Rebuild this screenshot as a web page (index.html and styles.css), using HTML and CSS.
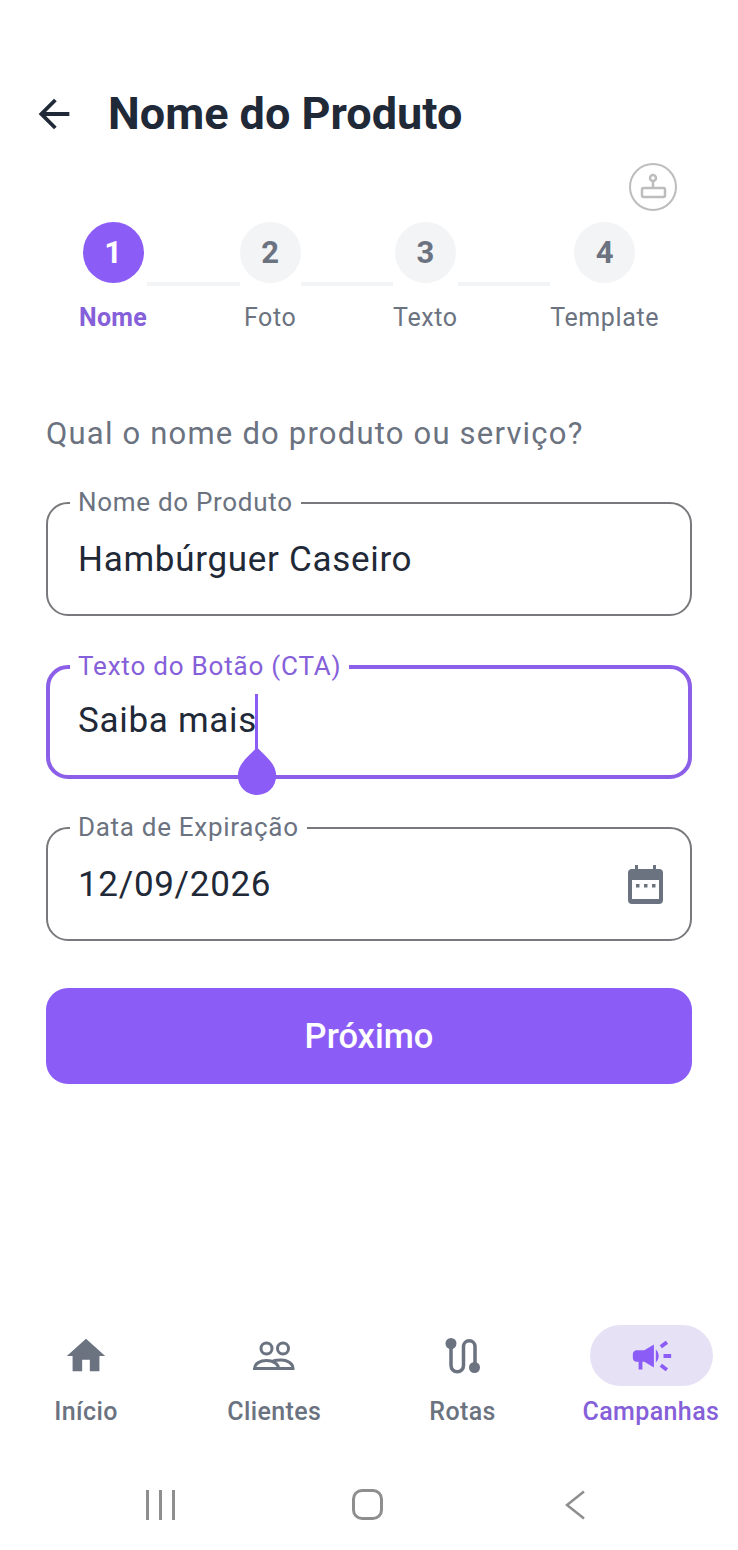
FILE: index.html
```html
<!DOCTYPE html>
<html lang="pt-BR">
<head>
  <meta charset="UTF-8" />
  <meta name="viewport" content="width=device-width, initial-scale=1.0" />
  <title>Nome do Produto</title>
  <link rel="stylesheet" href="styles.css">
</head>
<body>
  <div class="screen">
    <header class="topbar">
      <svg class="back" viewBox="0 0 24 24"><path d="M20 11H7.83l5.59-5.59L12 4l-8 8 8 8 1.41-1.41L7.83 13H20v-2z"/></svg>
      <h1>Nome do Produto</h1>
    </header>

    <div class="tools">
      <svg class="stamp" viewBox="0 0 48 48">
        <circle cx="24" cy="24" r="23"/>
        <g class="stamp-mark">
          <circle cx="24" cy="15" r="3"/>
          <path d="M24 18v7"/>
          <rect x="13" y="25" width="23" height="9" rx="1.5"/>
        </g>
      </svg>
    </div>

    <div class="stepper">
      <div class="step active"><span class="dot">1</span><span class="label">Nome</span></div>
      <span class="line"></span>
      <div class="step"><span class="dot">2</span><span class="label">Foto</span></div>
      <span class="line"></span>
      <div class="step"><span class="dot">3</span><span class="label">Texto</span></div>
      <span class="line"></span>
      <div class="step"><span class="dot">4</span><span class="label">Template</span></div>
    </div>

    <form class="form">
      <p class="question">Qual o nome do produto ou serviço?</p>

      <fieldset class="field">
        <legend>Nome do Produto</legend>
        <div class="value">Hambúrguer Caseiro</div>
      </fieldset>

      <fieldset class="field focus">
        <legend>Texto do Botão (CTA)</legend>
        <div class="value">Saiba mais<span class="caret"><svg class="handle" viewBox="0 0 40 50"><path d="M20 0C26 8 40 16 40 30A20 20 0 0 1 0 30C0 16 14 8 20 0z"/></svg></span></div>
      </fieldset>

      <fieldset class="field">
        <legend>Data de Expiração</legend>
        <div class="value">
          12/09/2026
          <svg class="calendar" viewBox="0 0 36 39">
            <path class="fill" d="M7 0h3v4h15V0h3v4h3a4 4 0 0 1 4 4v27a4 4 0 0 1-4 4H4a4 4 0 0 1-4-4V8a4 4 0 0 1 4-4h3z"/>
            <rect class="paper" x="4" y="15" width="27" height="19"/>
            <rect class="fill" x="8" y="19" width="3.5" height="3.5"/>
            <rect class="fill" x="16" y="19" width="3.5" height="3.5"/>
            <rect class="fill" x="24" y="19" width="3.5" height="3.5"/>
          </svg>
        </div>
      </fieldset>

      <button type="button" class="next">Próximo</button>
    </form>

    <nav class="tabs">
      <div class="tab">
        <span class="pill"><svg viewBox="0 0 24 24"><path class="solid" d="M10 20v-6h4v6h5v-8h3L12 3 2 12h3v8z"/></svg></span>
        <span class="tab-label">Início</span>
      </div>
      <div class="tab">
        <span class="pill"><svg viewBox="0 0 46 46">
          <circle class="outline" cx="15.5" cy="15.5" r="5.5"/>
          <circle class="outline" cx="32" cy="15.5" r="5.5"/>
          <path class="outline" d="M3.5 35.5c0-5 6-8 12-8s12 3 12 8zM22 28c3-1 6-1 8-1 6 0 12 3 12 8.5H27.5"/>
        </svg></span>
        <span class="tab-label">Clientes</span>
      </div>
      <div class="tab">
        <span class="pill"><svg viewBox="0 0 46 46">
          <path class="outline thick" d="M11 10.500V32.500a6.250 6.250 0 0 0 12.500 0V13.500a5.750 5.750 0 0 1 11.500 0V34.500"/>
          <circle class="solid" cx="11" cy="10.500" r="5.500"/>
          <circle class="solid" cx="34.500" cy="34.500" r="5.500"/>
        </svg></span>
        <span class="tab-label">Rotas</span>
      </div>
      <div class="tab selected">
        <span class="pill"><svg viewBox="0 0 24 24"><path class="solid" d="M18 11v2h4v-2h-4zm-2 6.610c.96.71 2.210 1.650 3.200 2.390.4-.53.8-1.070 1.200-1.600-.99-.74-2.240-1.680-3.200-2.400-.4.54-.8 1.080-1.200 1.610zM20.400 5.600c-.4-.53-.8-1.070-1.200-1.600-.99.74-2.240 1.680-3.200 2.400.4.53.8 1.070 1.200 1.600.96-.72 2.210-1.650 3.200-2.400zM4 9c-1.100 0-2 .9-2 2v2c0 1.100.9 2 2 2h1v4h2v-4h1l5 3V6L8 9H4zm11.500 3c0-1.330-.58-2.530-1.500-3.350v6.690c.92-.81 1.500-2.010 1.500-3.340z"/></svg></span>
        <span class="tab-label">Campanhas</span>
      </div>
    </nav>

    <div class="sysbar">
      <div class="sys"><span class="bars"><i></i><i></i><i></i></span></div>
      <div class="sys"><span class="square"></span></div>
      <div class="sys"><svg class="chev" viewBox="0 0 20 30"><path d="M19 1.500L2 15l17 13.500"/></svg></div>
    </div>
  </div>
</body>
</html>
```

FILE: styles.css
```css
*{box-sizing:border-box;font-family:Roboto,"Liberation Sans",sans-serif}
html,body{margin:0;background:#fff}
.screen{width:738px;height:1550px;overflow:hidden;display:flex;flex-direction:column}

.topbar{display:flex;align-items:center;padding:89px 0 0 31px;height:139px}
.back{width:46px;height:46px;fill:#1f2937}
h1{margin:0 0 0 31px;font-size:45px;line-height:50px;font-weight:700;color:#1f2937}

.tools{display:flex;justify-content:flex-end;padding:24px 61px 0 0}
.stamp{width:48px;height:48px;fill:none;stroke:#bdbdbd;stroke-width:2}
.stamp-mark{stroke-width:2.500}

.stepper{display:flex;align-items:flex-start;padding:11px 0 0 79px}
.step{display:flex;flex-direction:column;align-items:center;gap:20px}
.dot{width:61px;height:61px;border-radius:50%;background:#f3f4f6;color:#6b7280;font-size:31px;font-weight:700;display:flex;align-items:center;justify-content:center}
.label{font-size:25px;line-height:30px;letter-spacing:.6px;color:#6b7280}
.step.active .dot{background:#8b5cf6;color:#fff}
.step.active .label{color:#8560d9;font-weight:700;letter-spacing:.3px}
.line{width:92.500px;height:4px;margin-top:60px;background:#f3f4f6}

.form{display:flex;flex-direction:column;padding:0 46px;margin-top:82px}
.question{margin:0 0 34px;font-size:31px;line-height:38px;letter-spacing:1.2px;color:#6b7280}
.field{margin:0 0 35px;padding:20px 30px 0;border:2px solid #79797d;border-radius:22px;min-width:0}
.field legend{margin-left:-8px;padding:0 8px 2px;font-size:26px;line-height:30px;letter-spacing:.7px;color:#6b7280}
.value{position:relative;display:flex;align-items:center;height:40px;margin-bottom:35px;font-size:35px;letter-spacing:.7px;color:#1f2937}
.field.focus{margin-bottom:33px;padding:17px 28px 0;border:4px solid #8b5fe8}
.field.focus legend{color:#8560d9;letter-spacing:.8px}

.caret{position:relative;display:block;width:3px;height:55px;margin:3px 0 0 -2px;background:#8b5cf6}
.handle{position:absolute;left:-18.500px;top:53px;width:40px;height:48px;fill:#8b5cf6}

.calendar{position:absolute;right:-4px;top:1px;width:36px;height:39px}
.calendar .fill{fill:#6b7280}
.calendar .paper{fill:#fff}

.next{height:96px;margin-top:12px;border:none;border-radius:22px;background:#8b5cf6;color:#fff;font-size:34.500px;font-weight:500}

.tabs{display:grid;grid-template-columns:repeat(4,172px);gap:16.300px;margin-top:auto}
.tab{display:flex;flex-direction:column;align-items:center;gap:11px}
.pill{display:flex;align-items:center;justify-content:center;width:123px;height:61px;border-radius:31px}
.pill svg{width:46px;height:46px}
.solid{fill:#6b7280}
.outline{fill:none;stroke:#6b7280;stroke-width:3}
.outline.thick{stroke-width:3.500}
.tab-label{font-size:25px;line-height:30px;font-weight:500;letter-spacing:.4px;color:#6b7280;white-space:nowrap}
.tab.selected .pill{margin-left:2px;background:#e7e1f6}
.tab.selected .solid{fill:#8b5cf6}
.tab.selected .tab-label{color:#8560d9}

.sysbar{display:grid;grid-template-columns:repeat(3,207px);padding:0 0 31px 57px;margin-top:62px;height:61px}
.sys{display:flex;justify-content:center;align-items:center}
.bars{display:flex;gap:10px}
.bars i{display:block;width:3px;height:30px;background:#8e8e8e}
.square{width:31px;height:31px;border:3px solid #8e8e8e;border-radius:10px}
.chev{width:20px;height:30px;fill:none;stroke:#8e8e8e;stroke-width:2.500}
```
